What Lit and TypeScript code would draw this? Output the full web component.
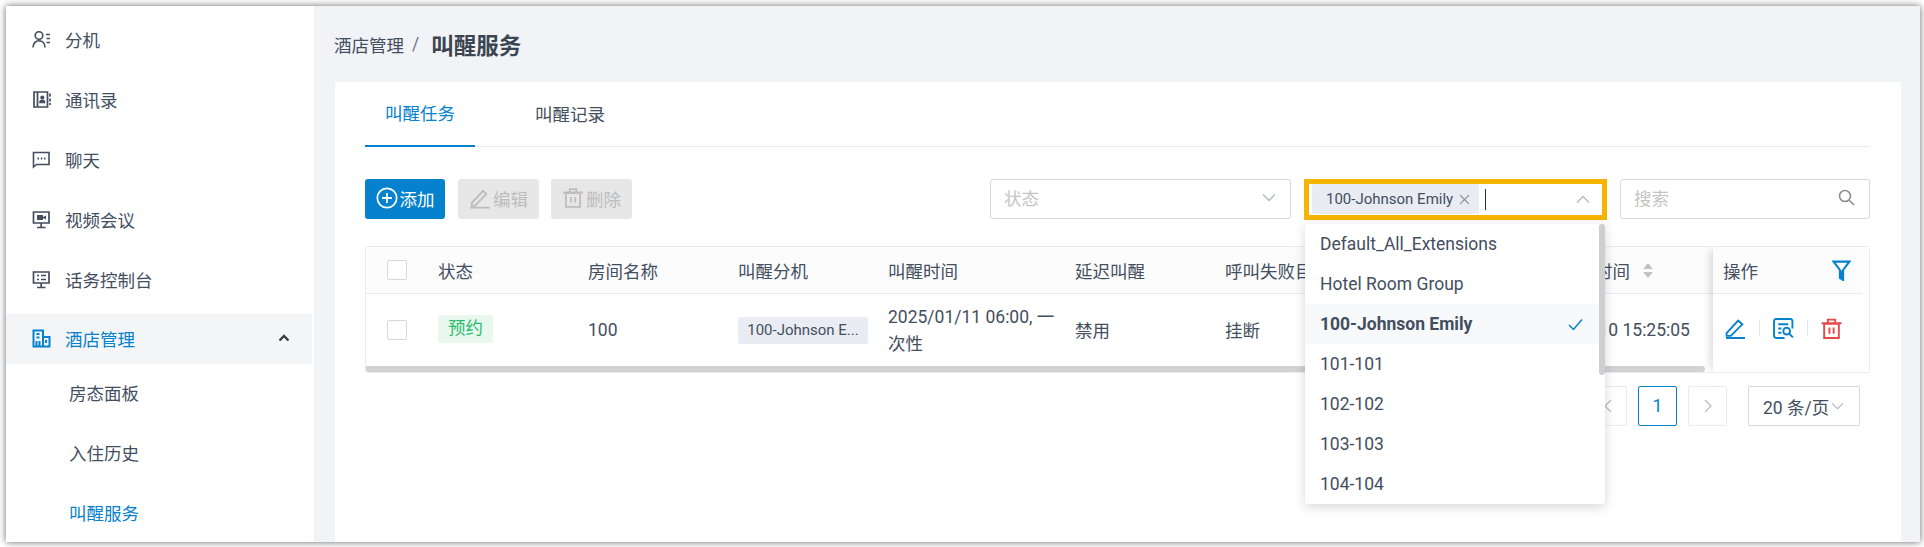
import { LitElement, css, html, svg } from 'lit'
import { customElement } from 'lit/decorators.js'

const navItems = [
   { label: '分机', icon: svg`<circle cx="7" cy="5.500" r="3.800"/><path d="M1 17.500c0-4 2.500-6.800 6-6.800s6 2.800 6 6.800M14 4.500h4M14.500 8.500h3.500M14.500 12.500h3.500"/>` },
   { label: '通讯录', icon: svg`<path d="M2 2h13.500v15H2zM5.500 2v15" stroke-width="1.700"/><path d="M18 3.500v3M18 8.500v3M18 13v2" stroke-width="1.700"/><circle cx="10.300" cy="7.500" r="1.300" fill="currentColor"/><path d="M8 12.500c0-3 4.500-3 4.500 0z" fill="currentColor"/>` },
   { label: '聊天', icon: svg`<path d="M1.500 2.500h15.500v12H4.500l-3 2.500z"/><path d="M5.500 8.500h1.500M8.800 8.500h1.500M12 8.500h1.500" stroke-width="1.800"/>` },
   { label: '视频会议', icon: svg`<path d="M1.500 2h15.500v11H1.500zM9.200 13v4M5 17.500h8.500" stroke-width="1.700"/><path d="M5 5h6v5H5zM11 7l3-1.500v4L11 8z" fill="currentColor" stroke="none"/>` },
   { label: '话务控制台', icon: svg`<path d="M1.500 2h15.500v11H1.500zM9.200 13v4M5 17.500h8.500M5 5.500h2M5 9.500h2M9 5.500h5M9 9.500h5" stroke-width="1.700"/>` },
]

const subItems = ['房态面板', '入住历史', '叫醒服务']

const dropdownItems = ['Default_All_Extensions', 'Hotel Room Group', '100-Johnson Emily', '101-101', '102-102', '103-103', '104-104']

const columns = ['状态', '房间名称', '叫醒分机', '叫醒时间', '延迟叫醒', '呼叫失败目的地']

@customElement('app-root')
export class AppRoot extends LitElement {

   render() {
      return html`
         <div class="frame">
            <aside class="sidebar">
               ${navItems.map(item => html`
                  <div class="nav">
                     <svg class="nav-icon" viewBox="0 0 19 19">${item.icon}</svg>
                     <span>${item.label}</span>
                  </div>
               `)}
               <div class="nav active">
                  <svg class="nav-icon" viewBox="0 0 19 19"><path stroke-width="2" d="M1.500 1.500h9.500v16H1.500zM11 8h6.500v9.500H11M0.500 17.500h18M4.500 5h3M4.500 8.500h3M4.500 12v5M7.500 12v5M14 11v3"/></svg>
                  <span class="nav-label">酒店管理</span>
                  <svg class="fold" viewBox="0 0 12 8"><path d="M1.500 6.500 6 2l4.500 4.500"/></svg>
               </div>
               ${subItems.map((s, i) => html`<div class="sub ${i === 2 ? 'current' : ''}">${s}</div>`)}
            </aside>

            <main class="main">
               <div class="crumbs">
                  <span>酒店管理</span><span class="sep">/</span><strong>叫醒服务</strong>
               </div>

               <section class="card">
                  <div class="tabs">
                     <div class="tab on">叫醒任务</div>
                     <div class="tab">叫醒记录</div>
                  </div>

                  <div class="toolbar">
                     <button class="btn primary">
                        <svg viewBox="0 0 20 20"><circle cx="10" cy="10" r="8.800"/><path d="M10 5.500v9M5.500 10h9"/></svg>添加
                     </button>
                     <button class="btn off">
                        <svg viewBox="0 0 20 20"><path d="M2.500 14.500 12.800 3.500l3 2.800L5.500 17H2.500zM1 18.800h18"/></svg>编辑
                     </button>
                     <button class="btn off">
                        <svg viewBox="0 0 20 20"><path d="M3.500 5.500h13V18h-13zM1 5h18M7 5V2h6v3M8 9v5M12 9v5"/></svg>删除
                     </button>

                     <div class="filters">
                        <div class="input status">
                           <span class="placeholder">状态</span>
                           <svg class="arrow" viewBox="0 0 14 9"><path d="M1 1.500 7 7.500l6-6"/></svg>
                        </div>
                        <div class="picker">
                           <div class="chip">100-Johnson Emily
                              <svg viewBox="0 0 10 10"><path d="M1 1l8 8M9 1 1 9"/></svg>
                           </div>
                           <i class="caret"></i>
                           <svg class="arrow up" viewBox="0 0 14 9"><path d="M1 7.500 7 1.500l6 6"/></svg>
                        </div>
                        <div class="input search">
                           <span class="placeholder">搜索</span>
                           <svg class="lens" viewBox="0 0 17 17"><circle cx="7" cy="7" r="5.500"/><path d="M11 11l5 5"/></svg>
                        </div>
                     </div>
                  </div>

                  <div class="table">
                     <div class="scroller">
                        <div class="row head">
                           <div class="cell"><i class="check"></i></div>
                           ${columns.map(c => html`<div class="cell">${c}</div>`)}
                           <div class="cell">最后修改时间
                              <svg class="sort" viewBox="0 0 9 14"><path d="M4.500 0 9 5.500H0zM4.500 14 0 8.500h9z"/></svg>
                           </div>
                        </div>
                        <div class="row body">
                           <div class="cell"><i class="check"></i></div>
                           <div class="cell"><span class="state">预约</span></div>
                           <div class="cell">100</div>
                           <div class="cell"><span class="ext">100-Johnson E...</span></div>
                           <div class="cell when">2025/01/11 06:00, 一次性</div>
                           <div class="cell">禁用</div>
                           <div class="cell">挂断</div>
                           <div class="cell">2025/01/10 15:25:05</div>
                        </div>
                        <div class="thumb"></div>
                     </div>
                     <div class="fixed">
                        <div class="fixed-head">
                           <span>操作</span>
                           <svg viewBox="0 0 18 20"><path d="M1.500 1.500h15L10.500 9.500V19L7.500 17V9.500z"/><path d="M7.500 10h3v9l-3-2z" fill="currentColor" stroke="none"/></svg>
                        </div>
                        <div class="actions">
                           <svg class="blue" viewBox="0 0 20 20"><path d="M1.500 14.500 12.500 2.500l4 3.500L5.500 17H1.500zM1 19h18"/></svg>
                           <i></i>
                           <svg class="blue" viewBox="0 0 20 20"><path d="M18.500 10V3q0-2-2-2H3Q1 1 1 3v14q0 2 2 2h8M5 6h9.500M5 10h3M5 14h3"/><circle cx="13" cy="12.500" r="3.200"/><path d="M15.500 15l3.500 3.500"/></svg>
                           <i></i>
                           <svg class="red" viewBox="0 0 20 20"><path d="M3 5.500h14V19H3zM0.500 5h19M6.500 5V1.500h7V5M8 9v6M12 9v6"/></svg>
                        </div>
                     </div>
                  </div>

                  <div class="pager">
                     <div class="page dim"><svg viewBox="0 0 8 14"><path d="M7 1 1 7l6 6"/></svg></div>
                     <div class="page now">1</div>
                     <div class="page dim"><svg viewBox="0 0 8 14"><path d="M1 1l6 6-6 6"/></svg></div>
                     <div class="size">20 条/页
                        <svg viewBox="0 0 14 9"><path d="M1 1.500 7 7.500l6-6"/></svg>
                     </div>
                  </div>

                  <div class="dropdown">
                     ${dropdownItems.map((d, i) => html`
                        <div class="option ${i === 2 ? 'picked' : ''}">
                           <span>${d}</span>
                           ${i === 2 ? html`<svg viewBox="0 0 15 13"><path d="M1 7l4.500 4.500L14 1.500"/></svg>` : ''}
                        </div>
                     `)}
                     <div class="bar"></div>
                  </div>
               </section>
            </main>
         </div>
      `
   }

   static styles = css`
   :host {
      display: block;
      width: 1924px;
      height: 547px;
      padding: 6px 4px 5px 6px;
      box-sizing: border-box;
      background: #fff;
      overflow: hidden;
      font-family: Roboto, "Noto Sans CJK SC", sans-serif;
      font-size: 17.5px;
      color: #434e5e;
   }
   * {
      box-sizing: border-box;
   }
   svg {
      fill: none;
      stroke: currentColor;
      stroke-width: 1.6;
      display: block;
      flex: none;
   }
   .frame {
      display: flex;
      height: 100%;
      background: #f2f3f7;
      box-shadow: 0 0 7px rgba(0, 0, 0, 0.6);
      overflow: hidden;
   }
   .sidebar {
      width: 308px;
      flex: none;
      padding-top: 3px;
      background: #fff;
      overflow: hidden;
   }
   .nav {
      display: flex;
      align-items: center;
      height: 60px;
      margin-right: 2px;
      padding-left: 26px;
      gap: 14px;
   }
   .nav-icon {
      width: 19px;
      height: 19px;
   }
   .nav-label {
      white-space: nowrap;
   }
   .nav.active {
      height: 50px;
      margin-top: 5px;
      padding-bottom: 2px;
      background: #f4f5f7;
      color: #0581cd;
   }
   .fold {
      width: 12px;
      height: 8px;
      margin-left: 129px;
      color: #3a3f48;
      stroke-width: 2.4;
   }
   .sub {
      display: flex;
      align-items: center;
      height: 60px;
      padding: 0 0 3px 63px;
   }
   .sub.current {
      color: #0581cd;
   }
   .main {
      flex: 1;
      min-width: 0;
      padding: 0 19px 0 21px;
      display: flex;
      flex-direction: column;
   }
   .crumbs {
      display: flex;
      align-items: center;
      height: 76px;
      flex: none;
      margin-left: -1px;
   }
   .sep {
      margin: 0 12px 0 8px;
      color: #6b7483;
   }
   .crumbs strong {
      font-size: 22.5px;
      font-weight: 700;
      color: #3b4552;
   }
   .card {
      position: relative;
      flex: 1;
      background: #fff;
      padding: 0 31px 0 30px;
   }
   .tabs {
      display: flex;
      gap: 40px;
      height: 65px;
      border-bottom: 1px solid #e9ebf2;
   }
   .tab {
      width: 110px;
      display: flex;
      align-items: center;
      justify-content: center;
      padding-bottom: 2px;
      margin-bottom: -1px;
      color: #434e5e;
   }
   .tab.on {
      color: #0581cd;
      border-bottom: 2px solid #0581cd;
   }
   .toolbar {
      display: flex;
      align-items: center;
      gap: 12px;
      height: 40px;
      margin-top: 32px;
   }
   .btn {
      display: flex;
      align-items: center;
      justify-content: center;
      gap: 2px;
      width: 81px;
      height: 40px;
      padding: 0 0 2px;
      border: 0;
      border-radius: 3px;
      font: inherit;
   }
   .btn svg {
      width: 22px;
      height: 22px;
   }
   .btn.primary {
      width: 80px;
      margin-right: 1px;
      background: #0581cd;
      color: #fff;
   }
   .btn.off {
      background: #e7e7e7;
      color: #bdbdbd;
   }
   .filters {
      display: flex;
      align-items: center;
      margin-left: auto;
      gap: 13px;
   }
   .input {
      display: flex;
      align-items: center;
      justify-content: space-between;
      height: 40px;
      padding: 0 14px 3px 13px;
      border: 1px solid #d5d7e3;
      border-radius: 3px;
   }
   .input.status {
      width: 301px;
   }
   .input.search {
      width: 250px;
   }
   .placeholder {
      color: #c4c4c4;
   }
   .arrow {
      width: 14px;
      height: 9px;
      color: #b5b8bf;
      stroke-width: 1.3;
   }
   .picker {
      display: flex;
      align-items: center;
      width: 303px;
      height: 41px;
      border: 5px solid #f5b400;
      padding-left: 3px;
   }
   .chip {
      display: flex;
      align-items: center;
      justify-content: space-between;
      width: 167px;
      height: 30px;
      padding: 0 9px 0 14px;
      background: #e9ecf3;
      border-radius: 2px;
      font-size: 15px;
   }
   .chip svg {
      width: 11px;
      height: 11px;
      color: #8b909a;
      stroke-width: 1.2;
   }
   .caret {
      width: 1px;
      height: 21px;
      margin-left: 6px;
      background: #2a2f38;
   }
   .arrow.up {
      margin-left: auto;
      margin-right: 12px;
   }
   .lens {
      width: 17px;
      height: 17px;
      color: #8f8f8f;
   }
   .table {
      display: flex;
      height: 127px;
      margin-top: 27px;
      border: 1px solid #e9ebf2;
      border-radius: 3px;
      overflow: hidden;
   }
   .scroller {
      position: relative;
      flex: 1;
      min-width: 0;
      overflow: hidden;
   }
   .row {
      display: grid;
      grid-template-columns: 72px 150px 150px 150px 187px 150px 300px 300px;
      width: 1459px;
      align-items: center;
   }
   .row.head {
      height: 47px;
      background: #fcfcfd;
      border-bottom: 1px solid #e9ebf2;
   }
   .row.body {
      height: 71px;
   }
   .cell {
      display: flex;
      align-items: center;
      min-width: 0;
      white-space: nowrap;
   }
   .cell.when {
      display: block;
      width: 170px;
      white-space: normal;
      line-height: 27px;
      margin-top: 2px;
   }
   .check {
      display: block;
      width: 20px;
      height: 20px;
      margin-left: 21px;
      border: 1px solid #d5d7e3;
      border-radius: 2px;
      background: #fff;
   }
   .state {
      display: block;
      width: 55px;
      height: 28px;
      line-height: 26px;
      text-align: center;
      background: #e8f8ef;
      color: #2dbb6f;
      border-radius: 2px;
      margin-top: -2px;
   }
   .ext {
      display: block;
      width: 130px;
      height: 27px;
      line-height: 27px;
      text-align: center;
      background: #e9ecf3;
      border-radius: 2px;
      font-size: 15px;
      margin-top: 1px;
   }
   .sort {
      width: 10px;
      height: 15px;
      margin-left: 13px;
      fill: #c2c2c2;
      stroke: none;
   }
   .thumb {
      position: absolute;
      left: 0;
      right: 8px;
      bottom: 0;
      height: 6px;
      background: #d2d2d2;
      border-radius: 0 3px 3px 0;
   }
   .fixed {
      width: 156px;
      flex: none;
      box-shadow: -6px 0 8px -3px rgba(0, 0, 0, 0.14);
      z-index: 1;
      background: #fff;
   }
   .fixed-head {
      display: flex;
      align-items: center;
      justify-content: space-between;
      height: 47px;
      margin-right: 6px;
      padding: 0 12px 0 10px;
      background: #fcfcfd;
      border-bottom: 1px solid #e9ebf2;
   }
   .fixed-head svg {
      width: 19px;
      height: 21px;
      color: #0581cd;
      stroke-width: 2;
   }
   .actions {
      display: flex;
      align-items: center;
      gap: 13px;
      height: 60px;
      padding: 8px 0 0 12px;
   }
   .actions svg {
      width: 21px;
      height: 21px;
      stroke-width: 1.8;
   }
   .actions i {
      width: 1px;
      height: 16px;
      background: #e3e5ec;
   }
   .blue {
      color: #0581cd;
   }
   .red {
      color: #e8484c;
   }
   .pager {
      display: flex;
      align-items: center;
      justify-content: flex-end;
      gap: 11px;
      height: 40px;
      margin-top: 13px;
      padding-right: 10px;
   }
   .page {
      display: flex;
      align-items: center;
      justify-content: center;
      width: 39px;
      height: 40px;
      border: 1px solid #e9ebf2;
      border-radius: 2px;
      color: #bdbdbd;
   }
   .page svg {
      width: 8px;
      height: 14px;
      stroke-width: 1.300;
   }
   .page.now {
      border-color: #0581cd;
      color: #0581cd;
   }
   .size {
      display: flex;
      align-items: center;
      width: 112px;
      height: 40px;
      margin-left: 10px;
      padding-left: 14px;
      border: 1px solid #d5d7e3;
      border-radius: 2px;
   }
   .size svg {
      width: 13px;
      height: 8px;
      color: #b5b8bf;
      stroke-width: 1.300;
      margin-left: 2px;
   }
   .dropdown {
      position: absolute;
      left: 970px;
      top: 142px;
      width: 300px;
      background: #fff;
      border-radius: 3px;
      box-shadow: 0 3px 12px rgba(0, 0, 0, 0.16);
      z-index: 3;
   }
   .option {
      display: flex;
      align-items: center;
      justify-content: space-between;
      height: 40px;
      padding: 0 22px 0 15px;
   }
   .option.picked {
      font-weight: 700;
      background: #f8f9fa;
   }
   .option svg {
      width: 15px;
      height: 13px;
      color: #0581cd;
      stroke-width: 1.500;
   }
   .bar {
      position: absolute;
      top: 0;
      right: 0;
      width: 6px;
      height: 151px;
      background: #cfcfcf;
      border-radius: 3px;
   }
   `
}

declare global {
   interface HTMLElementTagNameMap {
      'app-root': AppRoot
   }
}
